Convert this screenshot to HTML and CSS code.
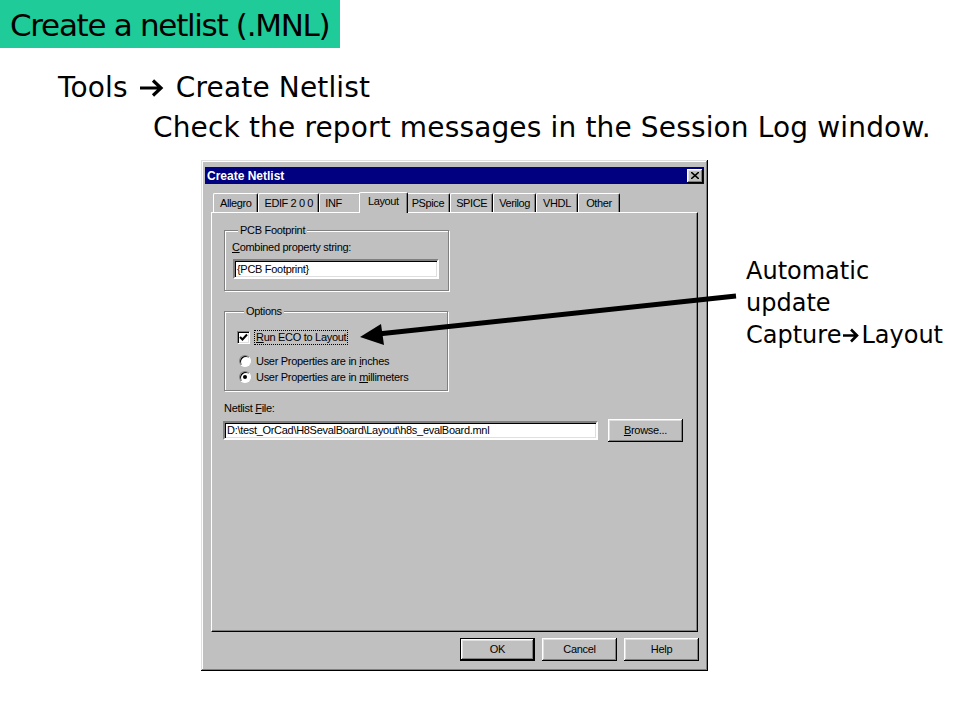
FILE: index.html
```html
<!DOCTYPE html>
<html lang="en">
<head>
    <meta charset="UTF-8">
    <meta name="viewport" content="width=device-width, initial-scale=1.0">
    <title>Create a netlist (.MNL)</title>
    <link rel="stylesheet" href="styles.css">
</head>
<body>
    <div class="slide">
        <div class="slide-title">Create a netlist (.MNL)</div>

        <div class="lead">
            <div class="lead-line">Tools <svg class="glyph-arrow" width="26" height="20" viewBox="0 0 26 20"><path d="M1 10H22M14 2.5L22 10L14 17.5" fill="none" stroke="#000" stroke-width="3.2"/></svg> Create Netlist</div>
            <div class="lead-line indent">Check the report messages in the Session Log window.</div>
        </div>

        <div class="stage">
            <div class="dialog">
                <div class="titlebar">
                    <span class="titlebar-text">Create Netlist</span>
                    <span class="close-btn">
                        <svg width="8" height="7" viewBox="0 0 8 7"><path d="M0 0L8 7M8 0L0 7" stroke="#000" stroke-width="1.6"/></svg>
                    </span>
                </div>

                <div class="tabs">
                    <div class="tab">Allegro</div>
                    <div class="tab">EDIF 2 0 0</div>
                    <div class="tab tab-inf">INF</div>
                    <div class="tab active">Layout</div>
                    <div class="tab">PSpice</div>
                    <div class="tab">SPICE</div>
                    <div class="tab">Verilog</div>
                    <div class="tab">VHDL</div>
                    <div class="tab">Other</div>
                </div>

                <div class="panel">
                    <fieldset class="group group-pcb">
                        <legend>PCB Footprint</legend>
                        <div class="field-label"><u>C</u>ombined property string:</div>
                        <div class="textbox textbox-prop">{PCB Footprint}</div>
                    </fieldset>

                    <fieldset class="group group-options">
                        <legend>Options</legend>
                        <div class="opt-row opt-check">
                            <span class="checkbox">
                                <svg width="9" height="9" viewBox="0 0 9 9"><path d="M1 4L3.5 6.5L8 1.5" fill="none" stroke="#000" stroke-width="2"/></svg>
                            </span>
                            <span class="focus-label"><u>R</u>un ECO to Layout</span>
                        </div>
                        <div class="opt-row">
                            <span class="radio"></span>
                            <span>User Properties are in <u>i</u>nches</span>
                        </div>
                        <div class="opt-row">
                            <span class="radio checked"></span>
                            <span>User Properties are in <u>m</u>illimeters</span>
                        </div>
                    </fieldset>

                    <div class="field-label file-label">Netlist <u>F</u>ile:</div>
                    <div class="file-row">
                        <div class="textbox textbox-file">D:\test_OrCad\H8SevalBoard\Layout\h8s_evalBoard.mnl</div>
                        <div class="btn btn-browse"><u>B</u>rowse...</div>
                    </div>
                </div>

                <div class="buttons">
                    <div class="btn btn-default">OK</div>
                    <div class="btn">Cancel</div>
                    <div class="btn">Help</div>
                </div>
            </div>

            <div class="note">
                Automatic<br>
                update<br>
                Capture<svg class="glyph-arrow small" width="18" height="15" viewBox="0 0 18 15"><path d="M1 7.5H15M9 1.5L15 7.5L9 13.5" fill="none" stroke="#000" stroke-width="2.6"/></svg>Layout
            </div>
        </div>

        <!-- callout arrow pointing at the ECO checkbox -->
        <svg class="pointer" width="960" height="720" viewBox="0 0 960 720">
            <line x1="736" y1="296" x2="378" y2="334" stroke="#000" stroke-width="5"/>
            <polygon points="360,337 384,345 381,324" fill="#000"/>
        </svg>
    </div>
</body>
</html>
```

FILE: styles.css
```css
* {
    box-sizing: border-box;
}

body {
    margin: 0;
    background: #fff;
}

.slide {
    position: relative;
    width: 960px;
    height: 720px;
    overflow: hidden;
    font-family: "DejaVu Sans", sans-serif;
    color: #000;
}

.slide-title {
    display: inline-block;
    height: 48px;
    padding: 0 11px 0 10px;
    background-color: #1fcb98;
    font-size: 31px;
    letter-spacing: -1.3px;
    line-height: 50px;
}

.lead {
    margin-top: 20px;
    font-size: 28px;
    letter-spacing: 0.15px;
}

.lead-line {
    height: 40px;
    line-height: 40px;
    padding-left: 58px;
    white-space: nowrap;
}

.lead-line.indent {
    padding-left: 153px;
}

.glyph-arrow {
    margin: 0 2px;
    vertical-align: -1px;
}

.glyph-arrow.small {
    margin: 0 1px;
    vertical-align: 0;
}

.stage {
    display: flex;
    align-items: flex-start;
    margin-top: 12px;
}

/* ---- dialog window ---- */

.dialog {
    width: 507px;
    height: 511px;
    margin-left: 201px;
    padding: 7px 4px 0 4px;
    background-color: #c0c0c0;
    box-shadow: inset -1px -1px #000, inset 1px 1px #dfdfdf, inset -2px -2px #808080, inset 2px 2px #fff;
    font-family: "Liberation Sans", Arial, sans-serif;
    font-size: 11px;
    letter-spacing: -0.3px;
    display: flex;
    flex-direction: column;
}

.titlebar {
    height: 17px;
    background-color: #000080;
    display: flex;
    align-items: center;
    justify-content: space-between;
    padding: 0 1px 0 2px;
}

.titlebar-text {
    color: #fff;
    font-weight: bold;
    font-size: 12px;
    letter-spacing: 0;
}

.close-btn {
    width: 16px;
    height: 14px;
    background-color: #c0c0c0;
    box-shadow: inset -1px -1px #000, inset 1px 1px #fff, inset -2px -2px #808080, inset 2px 2px #dfdfdf;
    display: flex;
    align-items: center;
    justify-content: center;
}

.tabs {
    display: flex;
    align-items: flex-end;
    height: 19px;
    margin: 9px 6px 0 6px;
    padding-left: 2px;
}

.tab {
    min-width: 42px;
    height: 19px;
    padding: 0 5px;
    line-height: 18px;
    text-align: center;
    letter-spacing: -0.4px;
    border: 1px solid;
    border-color: #fff #000 transparent #fff;
    border-bottom: none;
    border-radius: 2px 2px 0 0;
    box-shadow: inset -1px 0 #808080;
    white-space: nowrap;
}

.tab:first-child {
    padding: 0 6px;
}

.tab-inf {
    padding-right: 18px;
}

.tab.active {
    position: relative;
    z-index: 1;
    height: 21px;
    margin: 0 -2px -1px -2px;
    padding: 0 8px;
    line-height: 16px;
    background-color: #c0c0c0;
}

.panel {
    height: 420px;
    margin: 0 6px;
    padding: 0 12px;
    border: 1px solid;
    border-color: #fff #000 #000 #fff;
    box-shadow: inset -1px -1px #808080;
}

.group {
    width: 224px;
    margin: 0;
    padding: 0 9px 0 13px;
    border: 1px solid #808080;
    box-shadow: 1px 1px #fff, inset 1px 1px #fff;
}

.group legend {
    margin-left: 6px;
    padding: 0 2px;
    line-height: 12px;
    background-color: #c0c0c0;
}

.group-pcb {
    margin-top: 11px;
    height: 67px;
    padding-left: 7px;
}

.group-pcb .field-label {
    margin-top: 5px;
}

.field-label {
    height: 13px;
    line-height: 13px;
}

.textbox {
    height: 20px;
    padding-left: 2px;
    line-height: 16px;
    background-color: #fff;
    border: 2px solid;
    border-color: #808080 #fff #fff #808080;
    box-shadow: inset 1px 1px #000, inset -1px -1px #dfdfdf;
    white-space: nowrap;
    overflow: hidden;
}

.textbox-prop {
    width: 206px;
    margin-top: 5px;
    margin-left: 1px;
}

.group-options {
    margin-top: 14px;
    height: 86px;
    padding-top: 12px;
}

.opt-row {
    display: flex;
    align-items: center;
    height: 16px;
}

.opt-check {
    margin-bottom: 8px;
}

.checkbox {
    width: 13px;
    height: 13px;
    margin: 0 4px 0 -1px;
    background-color: #fff;
    border: 1px solid;
    border-color: #808080 #fff #fff #808080;
    box-shadow: inset 1px 1px #000, inset -1px -1px #dfdfdf;
    display: flex;
    align-items: center;
    justify-content: center;
}

.focus-label {
    padding: 0 1px;
    border: 1px dotted #000;
    line-height: 13px;
}

.radio {
    width: 12px;
    height: 12px;
    margin: 0 5px 0 1px;
    border-radius: 50%;
    background-color: #fff;
    border: 1px solid;
    border-color: #808080 #fff #fff #808080;
    box-shadow: inset 1px 1px #000;
    display: flex;
    align-items: center;
    justify-content: center;
}

.radio.checked::after {
    content: "";
    width: 4px;
    height: 4px;
    border-radius: 50%;
    background-color: #000;
}

.file-label {
    margin-top: 11px;
}

.file-row {
    display: flex;
    align-items: center;
    margin-top: 4px;
    margin-left: -1px;
}

.textbox-file {
    width: 375px;
    height: 19px;
    line-height: 15px;
}

.btn {
    width: 75px;
    height: 23px;
    line-height: 23px;
    text-align: center;
    background-color: #c0c0c0;
    box-shadow: inset -1px -1px #000, inset 1px 1px #fff, inset -2px -2px #808080, inset 2px 2px #dfdfdf;
}

.btn-browse {
    margin-left: 10px;
}

.btn-default {
    border: 1px solid #000;
    line-height: 21px;
}

.buttons {
    display: flex;
    justify-content: flex-end;
    gap: 7px;
    margin: 6px 5px 0 0;
}

/* ---- annotation ---- */

.note {
    margin: 95px 0 0 38px;
    font-size: 24px;
    line-height: 32px;
    white-space: nowrap;
}

.pointer {
    position: absolute;
    top: 0;
    left: 0;
    pointer-events: none;
}
```
